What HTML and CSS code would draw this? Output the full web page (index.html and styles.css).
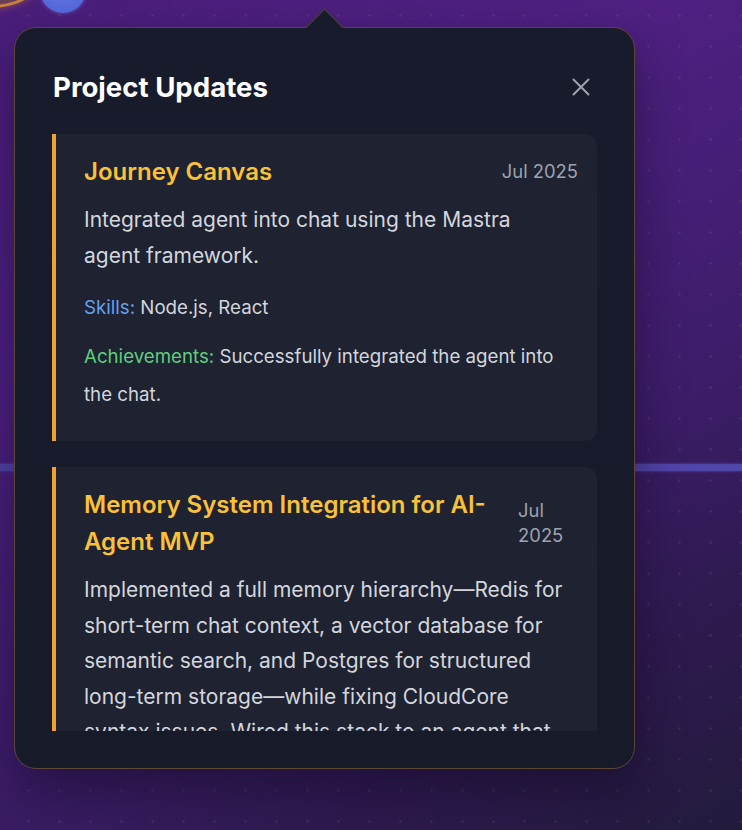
FILE: index.html
```html
<!DOCTYPE html>
<html lang="en">
<head>
<meta charset="utf-8">
<title>Project Updates</title>
<link rel="stylesheet" href="styles.css">
</head>
<body>
<div class="canvas">
  <div class="node node-orange"></div>
  <div class="node node-blue"></div>
  <div class="edge"></div>

  <section class="popover">
    <span class="popover-arrow"></span>
    <header class="popover-header">
      <h2 class="popover-title">Project Updates</h2>
      <button class="close-btn" aria-label="Close">
        <svg width="18" height="18" viewBox="0 0 18 18" fill="none" stroke="currentColor" stroke-width="2" stroke-linecap="round">
          <path d="M1.5 1.5 16.5 16.5M16.5 1.5 1.5 16.5"/>
        </svg>
      </button>
    </header>

    <div class="updates">
      <article class="update">
        <div class="update-head">
          <h3 class="update-title">Journey Canvas</h3>
          <span class="update-date">Jul 2025</span>
        </div>
        <p class="update-text">Integrated agent into chat using the Mastra agent framework.</p>
        <p class="update-meta meta-skills"><span class="label-skills">Skills:</span> Node.js, React</p>
        <p class="update-meta"><span class="label-ach">Achievements:</span> Successfully integrated the agent into the chat.</p>
      </article>

      <article class="update">
        <div class="update-head">
          <h3 class="update-title">Memory System Integration for AI-Agent MVP</h3>
          <span class="update-date">Jul 2025</span>
        </div>
        <p class="update-text">Implemented a full memory hierarchy—Redis for short-term chat context, a vector database for semantic search, and Postgres for structured long-term storage—while fixing CloudCore syntax issues. Wired this stack to an agent that can recall prior conversations and retrieve relevant knowledge.</p>
        <p class="update-meta meta-skills"><span class="label-skills">Skills:</span> Redis, Postgres, Vector DB</p>
        <p class="update-meta"><span class="label-ach">Achievements:</span> Shipped a working memory layer for the MVP.</p>
      </article>
    </div>
  </section>
</div>
</body>
</html>
```

FILE: styles.css
```css
html, body {
  margin: 0;
  padding: 0;
  height: 100%;
}

body {
  font-family: Inter, "Noto Sans", "Liberation Sans", sans-serif;
  overflow: hidden;
  background: #2c1a4e;
}

.canvas {
  position: relative;
  width: 742px;
  height: 830px;
  overflow: hidden;
  background:
    radial-gradient(circle, rgba(255, 255, 255, 0.07) 1px, transparent 1.6px) 13px 0 / 31px 31px,
    linear-gradient(150deg, #4a1e7b 0%, #4f2082 30%, #3e1d6c 60%, #2d1a4e 82%, #231a3c 100%);
}

/* decorative canvas nodes behind the popover */
.node {
  position: absolute;
  border-radius: 50%;
}

.node-orange {
  left: -62px;
  top: -62px;
  width: 100px;
  height: 64px;
  background: #6a3f5a;
  border: 3px solid #c8803c;
  box-shadow: 0 0 8px rgba(230, 140, 50, 0.45);
}

.node-blue {
  left: 40px;
  top: -33px;
  width: 46px;
  height: 46px;
  background: radial-gradient(circle at 50% 40%, #6479e6, #5264d8);
  box-shadow: 0 0 4px rgba(130, 150, 255, 0.5);
}

.edge {
  position: absolute;
  left: 0;
  right: 0;
  top: 464px;
  height: 7px;
  background: #5045a8;
  box-shadow: 0 0 3px rgba(110, 100, 230, 0.6);
}

/* popover */
.popover {
  position: absolute;
  left: 14px;
  top: 27px;
  width: 621px;
  height: 742px;
  box-sizing: border-box;
  padding: 37px;
  display: flex;
  flex-direction: column;
  background: linear-gradient(180deg, #171b2b 0%, #161a29 100%);
  border: 1px solid #5c4733;
  border-radius: 22px;
  box-shadow: 0 20px 50px rgba(10, 5, 25, 0.45);
}

.popover-arrow {
  position: absolute;
  left: 296px;
  top: -14px;
  width: 26px;
  height: 26px;
  background: #171b2b;
  border-top: 1px solid #5c4733;
  border-left: 1px solid #5c4733;
  transform: rotate(45deg);
}

.popover-header {
  height: 44px;
  display: flex;
  align-items: center;
  justify-content: space-between;
  margin-bottom: 25px;
  flex-shrink: 0;
}

.popover-title {
  margin: 0 0 0 1px;
  font-size: 27.6px;
  font-weight: 700;
  line-height: 46px;
  color: #ffffff;
}

.close-btn {
  width: 32px;
  height: 32px;
  padding: 0;
  border: 0;
  background: none;
  color: #9ea3ae;
  display: flex;
  align-items: center;
  justify-content: center;
}

.updates {
  flex: 1;
  min-height: 0;
  overflow-y: auto;
  scrollbar-width: none;
  display: flex;
  flex-direction: column;
  gap: 26px;
}

.updates::-webkit-scrollbar {
  display: none;
}

.update {
  flex-shrink: 0;
  background: #1e2231;
  border-left: 4px solid #eea233;
  border-radius: 0 12px 12px 0;
  padding: 19px 19px 27px 28px;
}

.update-head {
  display: flex;
  align-items: center;
  justify-content: space-between;
  gap: 16px;
}

.update-title {
  margin: 0;
  font-size: 24px;
  font-weight: 600;
  line-height: 37px;
  color: #f9c03a;
}

.update-date {
  font-size: 18.4px;
  line-height: 25px;
  color: #9ca3af;
}

.update-text {
  margin: 12px 0 16px;
  padding-right: 10px;
  font-size: 21px;
  line-height: 35.5px;
  color: #d3d6dd;
}

.update-meta {
  margin: 0;
  font-size: 18.7px;
  line-height: 38px;
  color: #d3d6dd;
}

.meta-skills {
  margin-bottom: 11px;
}

.label-skills {
  color: #63a0f0;
}

.label-ach {
  color: #5fcf7e;
}
```
